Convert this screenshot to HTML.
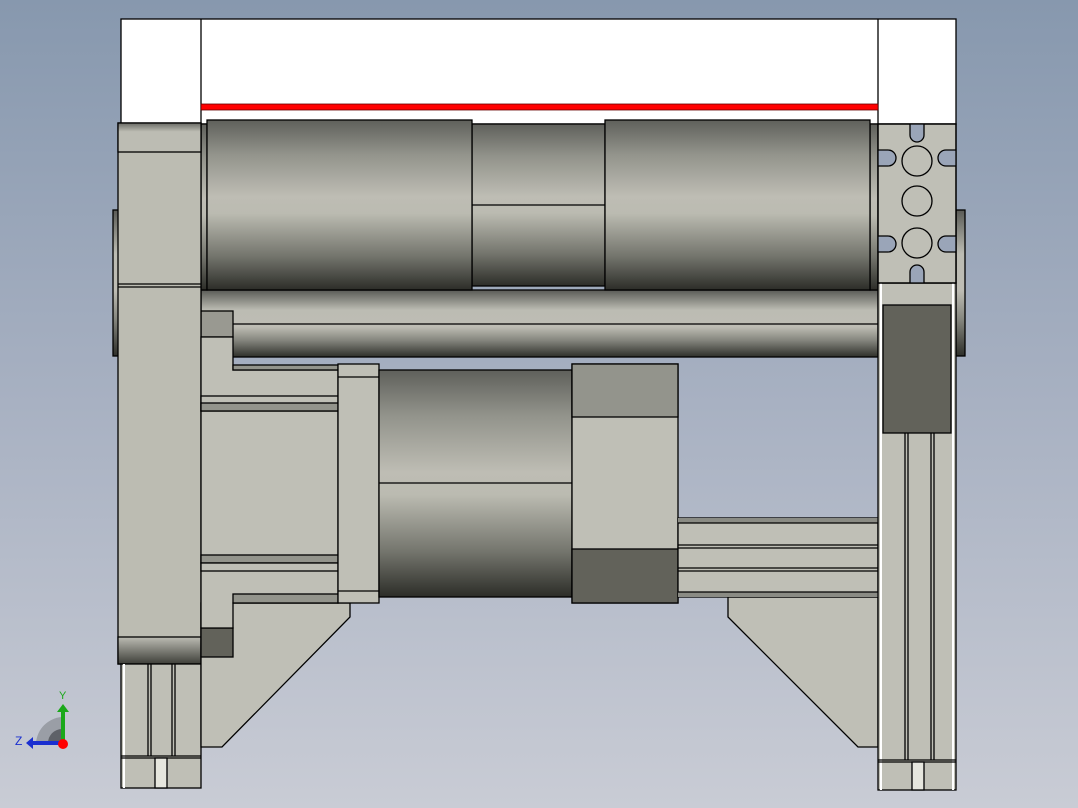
<!DOCTYPE html>
<html><head><meta charset="utf-8"><style>
html,body{margin:0;padding:0;width:1078px;height:808px;overflow:hidden}
svg{display:block}
</style></head><body>
<svg width="1078" height="808" viewBox="0 0 1078 808" xmlns="http://www.w3.org/2000/svg">
<defs>
<linearGradient id="bg" x1="0" y1="0" x2="0" y2="1"><stop offset="0" stop-color="#8798ae"/><stop offset="0.5" stop-color="#a8b1c2"/><stop offset="1" stop-color="#c9ccd5"/></linearGradient>
<linearGradient id="cyl" x1="0" y1="0" x2="0" y2="1"><stop offset="0" stop-color="#5f605b"/><stop offset="0.2" stop-color="#92938b"/><stop offset="0.45" stop-color="#bebdb4"/><stop offset="0.55" stop-color="#bbbbb1"/><stop offset="0.8" stop-color="#74756d"/><stop offset="1" stop-color="#2c2d28"/></linearGradient>
<linearGradient id="rod" x1="0" y1="0" x2="0" y2="1"><stop offset="0" stop-color="#5a5b56"/><stop offset="0.3" stop-color="#bcbcb3"/><stop offset="0.55" stop-color="#bebdb4"/><stop offset="0.75" stop-color="#85867e"/><stop offset="1" stop-color="#2e2f2a"/></linearGradient>
<linearGradient id="dk" x1="0" y1="0" x2="0" y2="1"><stop offset="0" stop-color="#bcbcb3"/><stop offset="1" stop-color="#3e3f39"/></linearGradient>
<linearGradient id="tp" x1="0" y1="0" x2="0" y2="1"><stop offset="0" stop-color="#6a6b65"/><stop offset="0.3" stop-color="#bcbcb3"/><stop offset="1" stop-color="#bcbcb3"/></linearGradient>
<clipPath id="pl"><rect x="878" y="124" width="78" height="159"/></clipPath>
</defs>
<rect width="1078" height="808" fill="url(#bg)"/>
<g stroke="#000" stroke-width="1.3">
<rect x="121" y="19" width="835" height="105" fill="#fff"/>
<line x1="201" y1="19" x2="201" y2="124"/><line x1="878" y1="19" x2="878" y2="124"/>
<rect x="201" y="104" width="677" height="6" fill="#f00" stroke="#600" stroke-width="0.8"/>
<rect x="113" y="210" width="6" height="146" fill="url(#rod)"/>
<rect x="956" y="210" width="9" height="146" fill="url(#rod)"/>
<rect x="201" y="290" width="677" height="67" fill="url(#rod)"/>
<line x1="233" y1="324" x2="878" y2="324"/>
<rect x="201" y="311" width="32" height="26" fill="#999991"/>
<rect x="201" y="124" width="6" height="166" fill="url(#cyl)"/>
<rect x="870" y="124" width="8" height="166" fill="url(#cyl)"/>
<rect x="472" y="124" width="133" height="162" fill="url(#cyl)"/>
<line x1="472" y1="205" x2="605" y2="205"/>
<rect x="207" y="120" width="265" height="170" fill="url(#cyl)"/>
<rect x="605" y="120" width="265" height="170" fill="url(#cyl)"/>
<rect x="118" y="123" width="83" height="541" fill="#bcbcb2"/>
<rect x="118" y="123" width="83" height="29" fill="url(#tp)"/>
<line x1="118" y1="284" x2="201" y2="284"/><line x1="118" y1="287" x2="201" y2="287"/>
<rect x="118" y="637" width="83" height="27" fill="url(#dk)"/>
<rect x="121" y="664" width="80" height="124" fill="#bfbfb6"/>
<line x1="124" y1="664" x2="124" y2="788" stroke="#fff" stroke-width="2"/>
<line x1="148" y1="664" x2="148" y2="756"/><line x1="151" y1="664" x2="151" y2="756"/>
<line x1="172" y1="664" x2="172" y2="756"/><line x1="175" y1="664" x2="175" y2="756"/>
<line x1="121" y1="756" x2="201" y2="756"/><line x1="121" y1="758" x2="201" y2="758"/>
<rect x="155" y="758" width="12" height="30" fill="#e6e6de"/>
<polygon points="201,603 350,603 350,617 222,747 201,747" fill="#bfbfb6"/>
<polygon points="728,597 878,597 878,747 858,747 728,617" fill="#bfbfb6"/>
<rect x="201" y="628" width="32" height="29" fill="#62625a"/>
<path d="M201 337 H233 V370 H338 V603 H233 V628 H201 Z" fill="#bfbfb6"/>
<rect x="233" y="365" width="105" height="5" fill="#93948c"/>
<rect x="201" y="396" width="137" height="15" fill="#bfbfb6"/>
<rect x="201" y="403" width="137" height="8" fill="#93948c"/>
<rect x="201" y="555" width="137" height="8" fill="#93948c"/>
<rect x="201" y="563" width="137" height="8" fill="#bfbfb6"/>
<rect x="233" y="594" width="105" height="9" fill="#93948c"/>
<rect x="338" y="364" width="41" height="239" fill="#bfbfb6"/>
<line x1="338" y1="377" x2="379" y2="377"/><line x1="338" y1="591" x2="379" y2="591"/>
<rect x="379" y="370" width="193" height="227" fill="url(#cyl)"/>
<line x1="379" y1="483" x2="572" y2="483"/>
<rect x="572" y="364" width="106" height="239" fill="#bfbfb6"/>
<rect x="572" y="364" width="106" height="53" fill="#93948c"/>
<rect x="572" y="549" width="106" height="54" fill="#62625a"/>
<rect x="678" y="518" width="200" height="79" fill="#bfbfb6"/>
<rect x="678" y="518" width="200" height="5" fill="#8a8b84" stroke="none"/>
<rect x="678" y="592" width="200" height="5" fill="#8a8b84" stroke="none"/>
<line x1="678" y1="523" x2="878" y2="523"/><line x1="678" y1="545" x2="878" y2="545"/><line x1="678" y1="548" x2="878" y2="548"/>
<line x1="678" y1="568" x2="878" y2="568"/><line x1="678" y1="571" x2="878" y2="571"/><line x1="678" y1="592" x2="878" y2="592"/>
<rect x="878" y="283" width="78" height="507" fill="#bfbfb6"/>
<line x1="881" y1="283" x2="881" y2="790" stroke="#fff" stroke-width="2"/>
<line x1="953" y1="283" x2="953" y2="790" stroke="#fff" stroke-width="2"/>
<rect x="883" y="305" width="68" height="128" fill="#62625a"/>
<line x1="905" y1="433" x2="905" y2="760"/><line x1="908" y1="433" x2="908" y2="760"/>
<line x1="931" y1="433" x2="931" y2="760"/><line x1="934" y1="433" x2="934" y2="760"/>
<line x1="878" y1="760" x2="956" y2="760"/><line x1="878" y1="762" x2="956" y2="762"/>
<rect x="912" y="762" width="12" height="28" fill="#e6e6de"/>
<rect x="878" y="124" width="78" height="159" fill="#bfbfb6"/>
<g fill="#bfbfb6">
<circle cx="917" cy="161" r="15"/><circle cx="917" cy="201" r="15"/><circle cx="917" cy="243" r="15"/>
</g>
<g fill="#9aa5b8" clip-path="url(#pl)">
<rect x="910" y="110" width="14" height="32" rx="7"/>
<rect x="910" y="265" width="14" height="32" rx="7"/>
<rect x="864" y="150" width="32" height="16" rx="8"/>
<rect x="938" y="150" width="32" height="16" rx="8"/>
<rect x="864" y="236" width="32" height="16" rx="8"/>
<rect x="938" y="236" width="32" height="16" rx="8"/>
</g>
<rect x="878" y="124" width="78" height="159" fill="none"/>
</g>
<path d="M36 743 A28 28 0 0 1 62 717 L62 743 Z" fill="#9a9ea6"/>
<path d="M48 743 A14 14 0 0 1 62 729 L62 743 Z" fill="#5e6168"/>
<rect x="61" y="711" width="4" height="32" fill="#1aa81a"/>
<polygon points="57,712 63,704 69,712" fill="#1aa81a"/>
<rect x="31" y="741" width="32" height="4" fill="#1a2fd0"/>
<polygon points="33,737 26,743 33,749" fill="#1a2fd0"/>
<circle cx="63" cy="744" r="5" fill="#f00"/>
<text x="59" y="699" font-family="Liberation Sans, sans-serif" font-size="11" fill="#1aa81a">Y</text>
<text x="15" y="745" font-family="Liberation Sans, sans-serif" font-size="12" fill="#1a2fd0">Z</text>
</svg>
</body></html>
